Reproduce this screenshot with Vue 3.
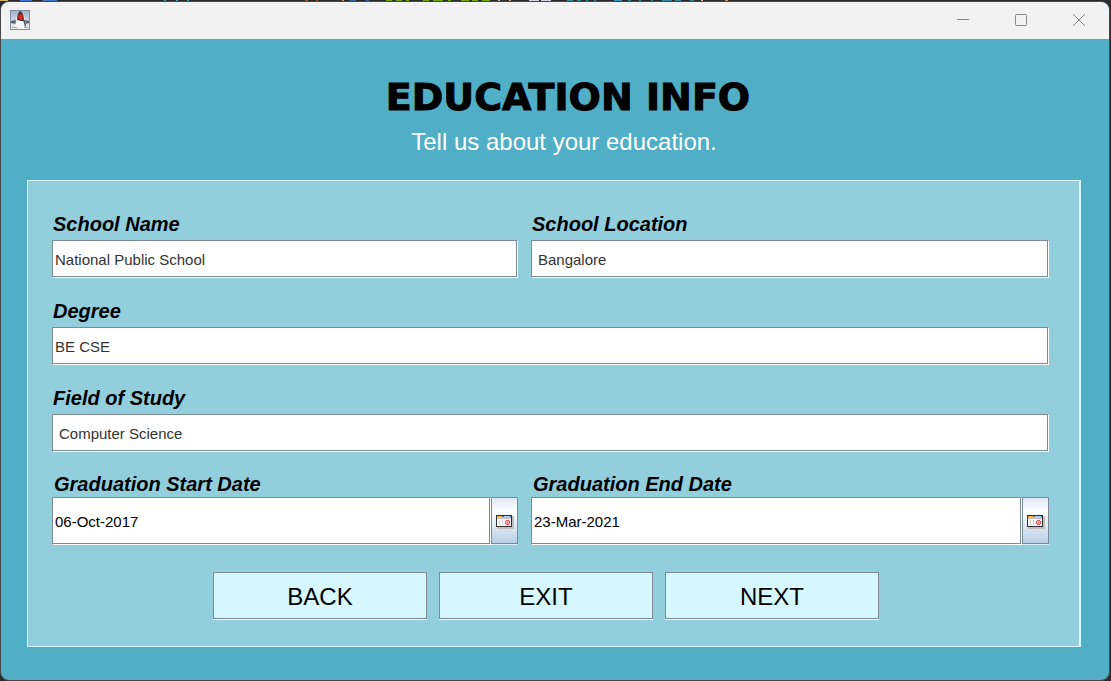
<script setup>
import { reactive } from 'vue'

const form = reactive({
  school: 'National Public School',
  location: 'Bangalore',
  degree: 'BE CSE',
  field: 'Computer Science',
  start: '06-Oct-2017',
  end: '23-Mar-2021'
})

const dates = [
  { key: 'start', label: 'Graduation Start Date' },
  { key: 'end', label: 'Graduation End Date' }
]

const specks = [
  [0, 8, '#d8b45a'], [20, 12, '#3f74c8'], [43, 14, '#3f74c8'], [164, 2, '#3fa0b8'], [176, 2, '#3fa0b8'], [187, 2, '#3fa0b8'],
  [305, 3, '#a0522d'], [316, 2, '#a0522d'], [342, 2, '#c8a070'], [350, 6, '#3a62a8'], [366, 3, '#3a62a8'],
  [386, 6, '#6da510'], [396, 6, '#6da510'], [406, 3, '#6da510'], [423, 6, '#6da510'], [433, 10, '#6da510'],
  [448, 3, '#6da510'], [461, 8, '#6da510'], [472, 6, '#6da510'], [482, 8, '#6da510'], [498, 2, '#b8c8d8'],
  [509, 2, '#d8a070'], [529, 10, '#d0d4e4'], [541, 10, '#d0d4e4'], [567, 6, '#3388a0'], [577, 4, '#3388a0'],
  [586, 2, '#3388a0'], [594, 2, '#3388a0'], [614, 8, '#3c90c0'], [628, 3, '#3388a0'], [639, 2, '#3388a0'],
  [651, 2, '#3388a0'], [662, 10, '#3388a0'], [675, 6, '#3388a0'], [690, 4, '#3388a0'], [701, 2, '#d8b8a0'], [725, 3, '#d89050']
]
</script>

<template>
  <div class="desktop">
    <svg class="specks" width="740" height="2" aria-hidden="true">
      <rect v-for="s in specks" :key="s[0]" :x="s[0]" y="0" :width="s[1]" height="1" :fill="s[2]" />
    </svg>
    <div class="window">
      <header class="titlebar">
        <svg class="duke" width="20" height="20" viewBox="0 0 20 20" aria-hidden="true">
          <defs>
            <linearGradient id="tile" x1="0" y1="0" x2="0" y2="1">
              <stop offset="0" stop-color="#a3b5c8" /><stop offset=".6" stop-color="#d3dbe3" /><stop offset="1" stop-color="#eef1f4" />
            </linearGradient>
          </defs>
          <rect x=".5" y=".5" width="19" height="19" fill="url(#tile)" stroke="#7c8fa5" />
          <path d="M1 11l5-1v4l-5-1zM14 10l5 1v2l-4 1z" fill="#59616b" />
          <path d="M10 1C8 2 7 5 6 9l-1 9h11c1-4-2-14-6-17z" fill="#f8f8f8" />
          <path d="M10 1C8 2 7 5 7 10l4 1 3 0c0-4-1-9-4-10z" fill="#33383e" />
          <path d="M13 10l2 0 1 6-1 1z" fill="#4a5159" />
          <ellipse cx="10.500" cy="7" rx="2.500" ry="3" fill="#d82420" />
          <path d="M2 17.500h5M14 17.500h4" stroke="#a2acb6" />
        </svg>
        <div class="controls">
          <button type="button" aria-label="Minimize">
            <svg width="14" height="14" viewBox="0 0 14 14"><path d="M1 6.5h12" /></svg>
          </button>
          <button type="button" aria-label="Maximize">
            <svg width="14" height="14" viewBox="0 0 14 14"><rect x="1.5" y="1.5" width="11" height="11" rx="1" /></svg>
          </button>
          <button type="button" aria-label="Close">
            <svg width="14" height="14" viewBox="0 0 14 14"><path d="M1 1l12 12M13 1L1 13" /></svg>
          </button>
        </div>
      </header>

      <main class="body">
        <h1>EDUCATION INFO</h1>
        <p class="lead">Tell us about your education.</p>

        <form class="panel" @submit.prevent>
          <div class="fields">
            <div class="field">
              <label for="school">School Name</label>
              <input id="school" v-model="form.school" type="text" />
            </div>
            <div class="field">
              <label for="location">School Location</label>
              <input id="location" v-model="form.location" class="indented" type="text" />
            </div>
            <div class="field wide">
              <label for="degree">Degree</label>
              <input id="degree" v-model="form.degree" type="text" />
            </div>
            <div class="field wide">
              <label for="study">Field of Study</label>
              <input id="study" v-model="form.field" class="indented" type="text" />
            </div>
            <div v-for="d in dates" :key="d.key" class="field date">
              <label :for="d.key">{{ d.label }}</label>
              <div class="picker">
                <input :id="d.key" v-model="form[d.key]" type="text" />
                <button type="button" class="calendar" :aria-label="'Choose ' + d.label">
                  <svg width="18" height="14" viewBox="0 0 18 14" shape-rendering="crispEdges">
                    <path d="M1 1h17v13H1z" fill="#c3bfc0" />
                    <path d="M0 0h16v12H0z" fill="#303030" />
                    <path d="M1 1h14v10H1z" fill="#f5f3f3" />
                    <path d="M1 1h5v1H1z" fill="#f5b335" />
                    <path d="M6 1h2v1H6z" fill="#6c6c78" />
                    <path d="M8 1h6v1H8z" fill="#a9cdf2" />
                    <path d="M14 1h1v1h-1z" fill="#486c98" />
                    <path d="M1 2h14v2H1z" fill="#c6c3c4" />
                    <path d="M3 5h1v5H3zM6 5h1v5H6z" fill="#d8d6d6" />
                    <path d="M10 5h3v1h-3zM10 9h3v1h-3zM9 6h1v3H9zM13 6h1v3h-1z" fill="#e05058" />
                    <path d="M10 6h3v3h-3z" fill="#f5b4b4" />
                    <path d="M11 7h1v1h-1z" fill="#e05058" />
                  </svg>
                </button>
              </div>
            </div>
          </div>
          <div class="actions">
            <button type="button">BACK</button>
            <button type="button">EXIT</button>
            <button type="submit">NEXT</button>
          </div>
        </form>
      </main>
    </div>
  </div>
</template>

<style>
body {
  background: #2b2b2b;
}
</style>

<style scoped>
* {
  box-sizing: border-box;
}

.desktop {
  display: flex;
  min-height: 100vh;
  padding: 1px 1px 1px 0;
  background: #2b2b2b;
  font-family: "Liberation Sans", Arial, sans-serif;
}

.specks {
  position: absolute;
  top: 0;
  left: 0;
}

.window {
  display: flex;
  flex: 1;
  flex-direction: column;
  overflow: hidden;
  border: 1px solid #484848;
  border-radius: 9px;
  background: #50aec6;
}

.titlebar {
  display: flex;
  align-items: center;
  justify-content: space-between;
  height: 37px;
  padding: 0 23px 1px 9px;
  background: #f2f2f2;
}

.duke {
  display: block;
}

.controls {
  display: flex;
  gap: 44px;
}

.controls button {
  display: block;
  width: 14px;
  height: 14px;
  padding: 0;
  border: 0;
  background: none;
}

.controls svg {
  display: block;
  fill: none;
  stroke: #888;
}

.body {
  flex: 1;
  padding: 35px 28px 33px 26px;
}

h1 {
  margin: 0;
  padding-left: 28px;
  font: bold 38px/46px "DejaVu Sans", "Arial Black", sans-serif;
  -webkit-text-stroke: 1px #000;
  text-align: center;
  color: #000;
}

.lead {
  margin: 9px 0 0;
  padding-left: 20px;
  font-size: 24px;
  line-height: 26px;
  text-align: center;
  color: #fff;
}

.panel {
  margin-top: 25px;
  padding: 29px 30px 26px 24px;
  border: 1px solid #d7f7fe;
  border-right-width: 2px;
  background: #92cedb;
}

.fields {
  display: grid;
  grid-template-columns: 466fr 518fr;
  gap: 19px 13px;
}

.wide {
  grid-column: 1 / -1;
}

label {
  display: block;
  margin-bottom: 2px;
  padding-left: 1px;
  font-size: 20px;
  font-weight: bold;
  font-style: italic;
  line-height: 28px;
  color: #000;
}

input {
  display: block;
  width: 100%;
  height: 38px;
  padding: 1px 2px 0;
  border: 1px solid #7a8a99;
  border-right-color: #fff;
  border-bottom-color: #fff;
  border-radius: 0;
  box-shadow: inset -1px -1px #7a8a99;
  background: #fff;
  font: 15px/20px "Liberation Sans", Arial, sans-serif;
  color: #333;
  outline: none;
}

input.indented {
  padding-left: 6px;
}

.date label {
  margin-bottom: 0;
  padding-left: 2px;
  line-height: 26px;
}

.picker {
  display: flex;
}

.picker input {
  flex: 1;
  min-width: 0;
  height: 48px;
  color: #000;
}

.calendar {
  display: flex;
  align-items: center;
  justify-content: center;
  width: 27px;
  height: 47px;
  padding: 2px 0 0;
  border: 1px solid #7a8a99;
  box-shadow: 0 1px #d7f0f8;
  background: linear-gradient(#dde8f3 0%, #fff 30%, #b8cfe5 100%);
}

.actions {
  display: grid;
  grid-template-columns: repeat(3, 1fr);
  gap: 12px;
  margin-top: 27px;
  padding: 0 170px 0 161px;
}

.actions button {
  height: 47px;
  margin-bottom: 1px;
  padding: 2px 0 0;
  border: 1px solid #7a8a99;
  box-shadow: 0 1px #fff;
  background: #d7f7fe;
  font: 24px/28px "Liberation Sans", Arial, sans-serif;
  color: #000;
}
</style>
